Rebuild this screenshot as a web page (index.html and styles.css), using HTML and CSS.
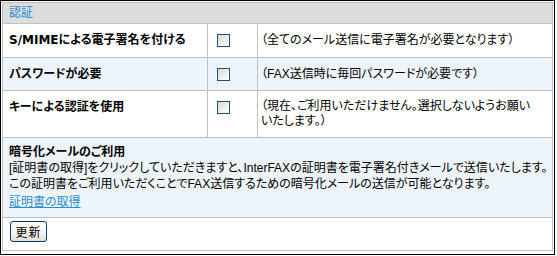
FILE: index.html
```html
<!DOCTYPE html>
<html lang="ja">
<head>
    <meta charset="UTF-8">
    <title>認証</title>
    <link rel="stylesheet" href="styles.css">
</head>
<body>
    <div class="frame">
        <div class="panel">
            <div class="panel-head">認証</div>

            <div class="row">
                <div class="cell label">S/MIMEによる電子署名を付ける</div>
                <div class="cell check"><input type="checkbox" class="box"></div>
                <div class="cell desc">（全てのメール送信に電子署名が必要となります）</div>
            </div>

            <div class="row row-alt">
                <div class="cell label">パスワードが必要</div>
                <div class="cell check"><input type="checkbox" class="box"></div>
                <div class="cell desc">（FAX送信時に毎回パスワードが必要です）</div>
            </div>

            <div class="row row-tall">
                <div class="cell label">キーによる認証を使用</div>
                <div class="cell check"><input type="checkbox" class="box"></div>
                <div class="cell desc desc-wrap">（現在、ご利用いただけません。選択しないようお願い<br>いたします。）</div>
            </div>

            <div class="section">
                <div class="section-title">暗号化メールのご利用</div>
                <div class="section-text">[証明書の取得]をクリックしていただきますと、InterFAXの証明書を電子署名付きメールで送信いたします。<br>この証明書をご利用いただくことでFAX送信するための暗号化メールの送信が可能となります。</div>
                <a href="#" class="cert-link">証明書の取得</a>
            </div>

            <div class="actions">
                <button class="Btn">更新</button>
            </div>
        </div>
    </div>
</body>
</html>
```

FILE: styles.css
```css
body {
    margin: 0;
    background: #ffffff;
    font-family: "Liberation Sans", "Noto Sans CJK JP", sans-serif;
    font-size: 12px;
    color: #000000;
    font-feature-settings: "palt";
}

.frame {
    width: 555px;
    height: 255px;
    box-sizing: border-box;
    border: 1px solid #000000;
    padding: 1px;
}

.panel {
    border: 1px solid #c0c0c0;
}

.panel-head {
    height: 20px;
    line-height: 20px;
    padding-left: 6px;
    background: #dddddd;
    color: #1a8ad4;
    border-bottom: 1px solid #c0c0c0;
}

.row {
    display: grid;
    grid-template-columns: 205px 50px 1fr;
    height: 33px;
    border-bottom: 1px solid #c0c0c0;
}

.row-alt {
    height: 32px;
    background: #eef4fb;
}

.row-tall {
    height: 46px;
}

.cell {
    border-right: 1px solid #c0c0c0;
    padding-top: 8px;
    line-height: 16px;
}

.cell:last-child {
    border-right: none;
}

.label {
    padding-left: 6px;
    font-family: "DejaVu Sans", "Noto Sans CJK JP", sans-serif;
    font-weight: bold;
}

.check {
    padding: 10px 0 0 9px;
}

.desc {
    padding-left: 3px;
    white-space: nowrap;
}

.desc-wrap {
    line-height: 15px;
}

.box {
    -webkit-appearance: none;
    appearance: none;
    display: block;
    margin: 0;
    width: 13px;
    height: 13px;
    box-sizing: border-box;
    border: 1px solid #1c5180;
    background: linear-gradient(135deg, #d8d8d2 0%, #f4f4f1 70%, #ffffff 100%);
}

.section {
    height: 80px;
    box-sizing: border-box;
    padding: 6px 0 0 6px;
    background: #eef4fb;
    border-bottom: 1px solid #c0c0c0;
    line-height: 16px;
}

.section-title {
    font-weight: bold;
}

.section-text {
    white-space: nowrap;
}

.cert-link {
    display: inline-block;
    margin-top: 2px;
    color: #2a8fd0;
    text-decoration: underline;
}

.actions {
    height: 32px;
    box-sizing: border-box;
    padding: 3px 0 0 7px;
}

.Btn {
    display: block;
    width: 37px;
    height: 21px;
    padding: 0;
    border: 1px solid #003c74;
    border-radius: 3px;
    background: linear-gradient(#ffffff 0%, #f6f5f0 60%, #e3e0d2 100%);
    font-family: "Liberation Sans", "Noto Sans CJK JP", sans-serif;
    font-size: 12px;
    letter-spacing: 1px;
    color: #000000;
    cursor: pointer;
}
```
